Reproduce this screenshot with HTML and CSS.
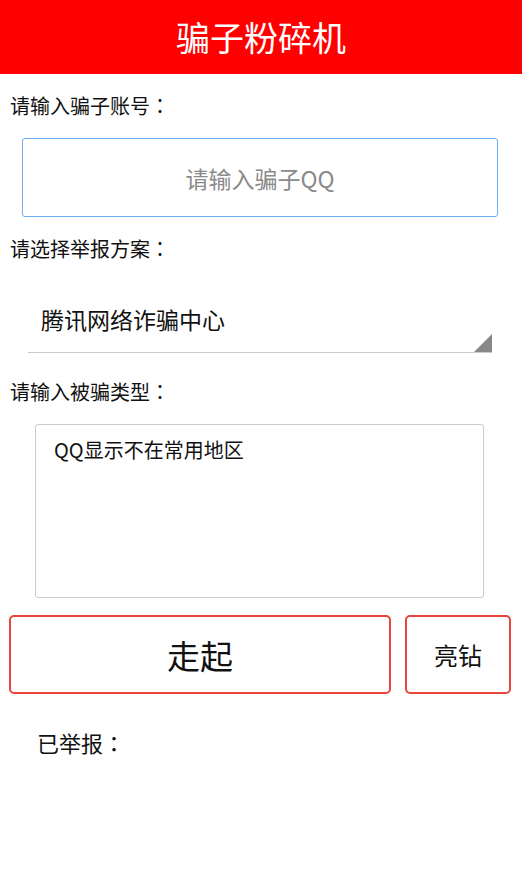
FILE: index.html
```html
<!DOCTYPE html>
<html lang="zh-CN">
<head>
<meta charset="utf-8">
<title>骗子粉碎机</title>
<link rel="stylesheet" href="styles.css">
</head>
<body>
<header class="topbar">骗子粉碎机</header>
<main class="form">
  <div class="label label-first">请输入骗子账号<span class="colon" lang="zh-TW">：</span></div>
  <div class="qq-input">请输入骗子QQ</div>
  <div class="label label-second">请选择举报方案<span class="colon" lang="zh-TW">：</span></div>
  <div class="spinner">
    <span class="spinner-text">腾讯网络诈骗中心</span>
    <span class="spinner-arrow"></span>
  </div>
  <div class="label label-third">请输入被骗类型<span class="colon" lang="zh-TW">：</span></div>
  <div class="textarea">QQ显示不在常用地区</div>
  <div class="btn-row">
    <div class="btn btn-go">走起</div>
    <div class="btn btn-diamond">亮钻</div>
  </div>
  <div class="reported">已举报<span class="colon" lang="zh-TW">：</span></div>
</main>
</body>
</html>
```

FILE: styles.css
```css
html, body {
  margin: 0;
  padding: 0;
  background: #ffffff;
}
body {
  font-family: "Noto Sans CJK SC", "Noto Sans", "DejaVu Sans", sans-serif;
  color: #111111;
  width: 522px;
}
.colon {
  font-family: "Noto Sans CJK TC", "Noto Sans CJK SC", sans-serif;
}
.topbar {
  height: 74px;
  background: #ff0000;
  color: #ffffff;
  font-size: 34px;
  line-height: 74px;
  text-align: center;
}
.form {
  display: flex;
  flex-direction: column;
}
.label {
  font-size: 20px;
  line-height: 24px;
  padding-left: 10px;
  color: #111111;
}
.label-first { margin-top: 20px; }
.qq-input {
  margin: 20px 24px 0 22px;
  height: 77px;
  border: 1px solid #6ab0f5;
  border-radius: 3px;
  display: flex;
  align-items: center;
  justify-content: center;
  font-size: 23px;
  color: #8a8a8a;
}
.label-second { margin-top: 20px; }
.spinner {
  position: relative;
  margin: 0 30px 0 28px;
  padding: 43px 0 18px 13px;
  border-bottom: 1px solid #cccccc;
}
.spinner-text {
  display: block;
  font-size: 23px;
  line-height: 30px;
  color: #111111;
}
.spinner-arrow {
  position: absolute;
  right: 0;
  bottom: 0;
  width: 0;
  height: 0;
  border-style: solid;
  border-width: 0 0 18px 18px;
  border-color: transparent transparent #888888 transparent;
}
.label-third { margin-top: 27px; }
.textarea {
  margin: 20px 38px 0 35px;
  border: 1px solid #cccccc;
  border-radius: 3px;
  padding: 13px 0 0 18px;
  box-sizing: border-box;
  height: 174px;
  font-size: 20px;
  line-height: 24px;
  color: #111111;
}
.btn-row {
  display: flex;
  gap: 14px;
  margin: 17px 11px 0 9px;
}
.btn {
  height: 79px;
  box-sizing: border-box;
  border: 2px solid #e8453c;
  border-radius: 5px;
  display: flex;
  align-items: center;
  justify-content: center;
  color: #111111;
}
.btn-go {
  flex: 1;
  font-size: 33px;
}
.btn-diamond {
  width: 106px;
  font-size: 24px;
}
.reported {
  margin-top: 34px;
  padding-left: 37px;
  font-size: 22px;
  line-height: 28px;
  color: #111111;
}
```
